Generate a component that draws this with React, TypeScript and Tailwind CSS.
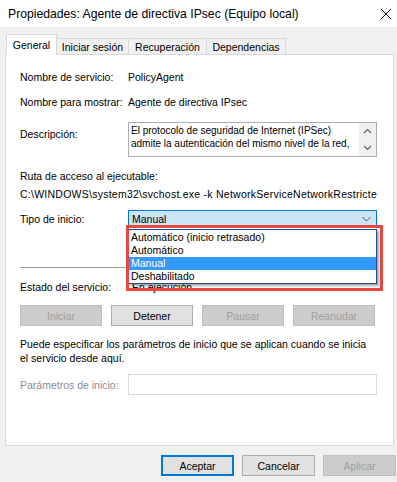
const font = "font-['Liberation_Sans',Arial,sans-serif]";

function Label({ children, gray }: { children: React.ReactNode; gray?: boolean }) {
  return <div className={`w-[108px] shrink-0 ${gray ? 'text-[#8c8c8c]' : 'text-black'}`}>{children}</div>;
}

function Btn({ children, disabled, primary, w }: { children: React.ReactNode; disabled?: boolean; primary?: boolean; w: string }) {
  const base = `${w} h-[21px] flex items-center justify-center shrink-0`;
  if (disabled) return <div className={`${base} bg-[#cccccc] border border-[#bfbfbf] text-[#a0a0a0]`}>{children}</div>;
  if (primary) return <div className={`${base} bg-[#e1e1e1] border-2 border-[#0078d7] text-black`}>{children}</div>;
  return <div className={`${base} bg-[#e1e1e1] border border-[#adadad] text-black`}>{children}</div>;
}

export default function App() {
  return (
    <div className={`relative w-[397px] h-[482px] overflow-hidden bg-[#f0f0f0] text-[10.5px] leading-[14px] ${font}`}>
      {/* title bar */}
      <div className="h-[27px] bg-white flex items-center justify-between pl-[8px] pr-[4px]">
        <span className="text-[12.2px] text-black">Propiedades: Agente de directiva IPsec (Equipo local)</span>
        <svg width="12" height="12" viewBox="0 0 12 12" className="mr-[1px]">
          <path d="M1 1 L11 11 M11 1 L1 11" stroke="#111" strokeWidth="1" />
        </svg>
      </div>

      {/* tabs */}
      <div className="flex items-end h-[27px] pl-[6px]">
        <div className="relative z-10 -mb-px h-[21px] w-[51px] bg-white border border-b-0 border-[#d9d9d9] flex items-start justify-center pt-[3px]">General</div>
        <div className="h-[16px] w-[72px] border border-l-0 border-b-0 border-[#d9d9d9] flex items-center justify-center">Iniciar sesión</div>
        <div className="h-[16px] w-[78px] border border-l-0 border-b-0 border-[#d9d9d9] flex items-center justify-center">Recuperación</div>
        <div className="h-[16px] w-[79px] border border-l-0 border-b-0 border-[#d9d9d9] flex items-center justify-center">Dependencias</div>
      </div>

      {/* panel */}
      <div className="ml-[5px] w-[389px] h-[392px] bg-white border border-[#d9d9d9] pl-[14px] pr-[16px] pt-[15px] flex flex-col">
        <div className="flex h-[14px] items-center">
          <Label>Nombre de servicio:</Label>
          <span>PolicyAgent</span>
        </div>
        <div className="flex h-[14px] items-center mt-[11px]">
          <Label>Nombre para mostrar:</Label>
          <span>Agente de directiva IPsec</span>
        </div>
        <div className="flex mt-[13px]">
          <div className="pt-[5px]"><Label>Descripción:</Label></div>
          <div className="flex w-[249px] h-[35px] border border-[#abadb3]">
            <div className="flex-1 pl-[2px] pt-[1px] text-[10px] leading-[13px] whitespace-nowrap">
              El protocolo de seguridad de Internet (IPSec)<br />admite la autenticación del mismo nivel de la red,
            </div>
            <div className="w-[17px] bg-[#f0f0f0] flex flex-col items-center justify-between py-[5px]">
              <svg width="9" height="6" viewBox="0 0 9 6"><path d="M1 5 L4.5 1.5 L8 5" fill="none" stroke="#606060" strokeWidth="1.2" /></svg>
              <svg width="9" height="6" viewBox="0 0 9 6"><path d="M1 1 L4.5 4.5 L8 1" fill="none" stroke="#606060" strokeWidth="1.2" /></svg>
            </div>
          </div>
        </div>
        <div className="h-[14px] mt-[12px]">Ruta de acceso al ejecutable:</div>
        <div className="h-[14px] mt-[4px] w-[357px] whitespace-nowrap overflow-hidden tracking-[0.25px]">
          C:\WINDOWS\system32\svchost.exe -k NetworkServiceNetworkRestricted
        </div>
        <div className="flex items-center mt-[9px]">
          <Label>Tipo de inicio:</Label>
          <div className="w-[249px] h-[18px] bg-[#cce4f7] border border-[#0078d7] flex items-center justify-between pl-[3px] pr-[5px]">
            <span>Manual</span>
            <svg width="9" height="6" viewBox="0 0 9 6"><path d="M0.5 1 L4.5 5 L8.5 1" fill="none" stroke="#505050" strokeWidth="1" /></svg>
          </div>
        </div>
        <div className="mt-[39px] h-px w-[357px] bg-[#a0a0a0]" />
        <div className="flex h-[14px] items-center mt-[12px]">
          <Label>Estado del servicio:</Label>
          <span className="pl-[4px]">En ejecución</span>
        </div>
        <div className="flex gap-[9px] mt-[11px]">
          <Btn w="w-[82px]" disabled>Iniciar</Btn>
          <Btn w="w-[82px]">Detener</Btn>
          <Btn w="w-[82px]" disabled>Pausar</Btn>
          <Btn w="w-[82px]" disabled>Reanudar</Btn>
        </div>
        <div className="mt-[11px]">
          Puede especificar los parámetros de inicio que se aplican cuando se inicia<br />el servicio desde aquí.
        </div>
        <div className="flex items-center mt-[9px]">
          <Label gray>Parámetros de inicio:</Label>
          <div className="w-[249px] h-[21px] border border-[#d9d9d9]" />
        </div>
      </div>

      {/* bottom buttons */}
      <div className="flex justify-end gap-[8px] pr-[1px] mt-[9px]">
        <Btn w="w-[73px]" primary>Aceptar</Btn>
        <Btn w="w-[73px]">Cancelar</Btn>
        <Btn w="w-[73px]" disabled>Aplicar</Btn>
      </div>

      {/* open dropdown list */}
      <div className="absolute left-[128px] top-[229px] w-[249px] h-[55px] bg-white border border-[#1e4f8a] shadow-[2px_2px_2px_rgba(0,0,0,0.35)] flex flex-col pt-px">
        <div className="h-[13px] leading-[13px] pl-[2px]">Automático (inicio retrasado)</div>
        <div className="h-[13px] leading-[13px] pl-[2px]">Automático</div>
        <div className="h-[13px] leading-[13px] pl-[2px] bg-[#3399ff] text-white">Manual</div>
        <div className="h-[13px] leading-[13px] pl-[2px]">Deshabilitado</div>
      </div>

      {/* red highlight */}
      <div className="absolute left-[126px] top-[225px] w-[257px] h-[66px] border-[3px] border-[#e8483d]" />
    </div>
  );
}
